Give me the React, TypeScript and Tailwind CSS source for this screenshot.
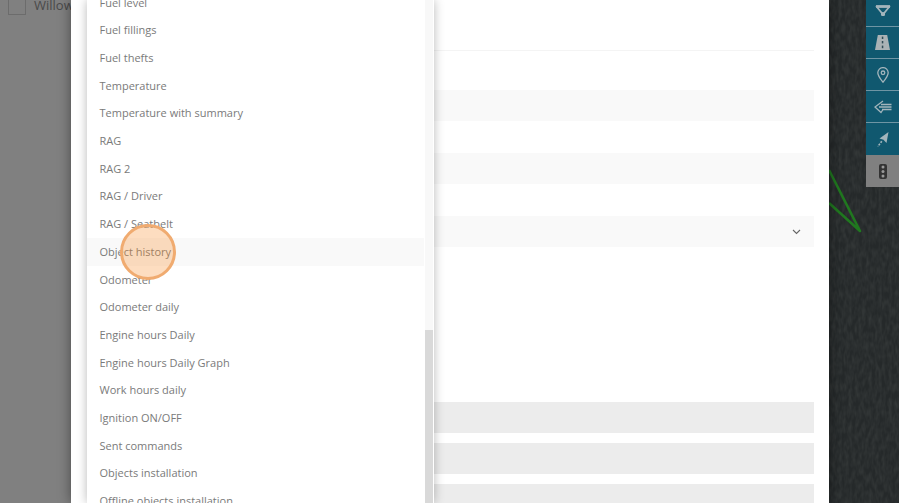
const items = [
  "Fuel level",
  "Fuel fillings",
  "Fuel thefts",
  "Temperature",
  "Temperature with summary",
  "RAG",
  "RAG 2",
  "RAG / Driver",
  "RAG / Seatbelt",
  "Object history",
  "Odometer",
  "Odometer daily",
  "Engine hours Daily",
  "Engine hours Daily Graph",
  "Work hours daily",
  "Ignition ON/OFF",
  "Sent commands",
  "Objects installation",
  "Offline objects installation",
];

const ink = "#a3b5bc";

function TriangleIcon() {
  return (
    <svg width="16" height="11" viewBox="0 0 16 11" fill="none" stroke={ink} strokeWidth="1.8" strokeLinejoin="round">
      <path d="M1.5 1.5 H14.5 L8 9.5 Z" />
      <path d="M1 1.5 H15" strokeWidth="2.6" />
      <circle cx="8" cy="9.2" r="1.2" fill={ink} />
    </svg>
  );
}

function RoadIcon() {
  return (
    <svg width="15" height="15" viewBox="0 0 15 15">
      <path d="M2.8 0 H12.2 L15 15 H0 Z" fill="#aab2b5" />
      <rect x="6.8" y="1.6" width="1.5" height="2.4" fill="#2f4a55" />
      <rect x="6.8" y="6" width="1.5" height="2.4" fill="#2f4a55" />
      <rect x="6.8" y="10.6" width="1.5" height="2.6" fill="#2f4a55" />
    </svg>
  );
}

function PinIcon() {
  return (
    <svg width="12" height="16" viewBox="0 0 12 16" fill="none" stroke={ink} strokeWidth="1.3">
      <path d="M6 15.2 C3.2 11.8 0.8 9 0.8 5.8 A5.2 5.2 0 0 1 11.2 5.8 C11.2 9 8.8 11.8 6 15.2 Z" />
      <circle cx="6" cy="5.8" r="1.8" />
    </svg>
  );
}

function LinesArrowIcon() {
  return (
    <svg width="18" height="14" viewBox="0 0 18 14" fill="none" stroke={ink} strokeWidth="1.3">
      <path d="M9 1 L1 7 L7 12.5 L9 9.5" />
      <path d="M7 4.5 H17.5 M5 7 H17.5 M8 9.5 H17.5" />
    </svg>
  );
}

function ArrowIcon() {
  return (
    <svg width="12" height="15" viewBox="0 0 12 15">
      <path d="M11.5 0 L9.5 11 L6.5 7.8 L2.5 6.5 Z" fill={ink} />
      <path d="M4.8 9.2 L0.8 14.6" stroke={ink} strokeWidth="1.6" strokeDasharray="2 1.2" fill="none" />
    </svg>
  );
}

function TrafficIcon() {
  return (
    <svg width="8" height="15" viewBox="0 0 8 15">
      <rect width="8" height="15" rx="2" fill="#333333" />
      <circle cx="4" cy="3" r="1.5" fill="#999999" />
      <circle cx="4" cy="7.5" r="1.5" fill="#999999" />
      <circle cx="4" cy="12" r="1.5" fill="#999999" />
    </svg>
  );
}

function ToolButton({ className, children }: { className: string; children: React.ReactNode }) {
  return <div className={`flex w-full items-center justify-center ${className}`}>{children}</div>;
}

export default function App() {
  return (
    <div className="relative flex h-[503px] w-[899px] overflow-hidden bg-[#808080] font-['Open_Sans',sans-serif] text-[11px] text-[#7a7a7a]">
      <div className="flex h-[15px] w-[71px] shrink-0 items-end overflow-hidden pl-2 whitespace-nowrap">
        <div className="h-[17px] w-[18px] shrink-0 border border-[#6c6c6c]" />
        <span className="mb-[3px] ml-2 text-[13px] leading-none text-[#4a4a4a]">Willow</span>
      </div>

      <main className="relative z-10 flex w-[758px] shrink-0 flex-col bg-white pr-[15px] pl-4 shadow-[0_0_12px_rgba(0,0,0,0.45)]">
        <div className="h-[51px] shrink-0 border-b border-[#f4f4f4]" />
        <div className="mt-[39px] h-[31px] shrink-0 bg-[#f9f9f9]" />
        <div className="mt-8 h-[31px] shrink-0 bg-[#f9f9f9]" />
        <div className="mt-8 flex h-[31px] shrink-0 items-center justify-end bg-[#f9f9f9] pr-[13px]">
          <svg width="9" height="6" viewBox="0 0 9 6" fill="none" stroke="#666666" strokeWidth="1.1">
            <path d="M1 1 L4.5 4.5 L8 1" />
          </svg>
        </div>
        <div className="mt-[155px] h-[31px] shrink-0 bg-[#ececec]" />
        <div className="mt-[10px] h-[31px] shrink-0 bg-[#ececec]" />
        <div className="mt-[10px] h-[31px] shrink-0 bg-[#ececec]" />

        <div className="absolute top-0 left-4 flex h-[503px] w-[347px] bg-white shadow-[0_0_10px_rgba(0,0,0,0.28)]">
          <ul className="-mt-[10.98px] w-[337px] shrink-0">
            {items.map((item) => (
              <li
                key={item}
                className={`flex h-[27.7px] items-center pl-[12.5px] whitespace-nowrap ${
                  item === "Object history" ? "bg-[#f9f9f9]" : ""
                }`}
              >
                {item}
              </li>
            ))}
          </ul>
          <div className="ml-px flex w-2 flex-col justify-end bg-[#f8f8f8]">
            <div className="h-[173px] bg-[#d9d9d9]" />
          </div>
        </div>

        <div className="absolute top-[224px] left-[49px] h-[56px] w-[56px] rounded-full border-[3px] border-[#f0ab70] bg-[#f9902f]/30" />
      </main>

      <aside className="relative flex grow justify-end overflow-hidden bg-[#25292a]">
        <svg className="absolute top-0 left-0" width="70" height="503">
          <filter id="grain">
            <feTurbulence type="fractalNoise" baseFrequency="0.3 0.12" numOctaves="2" seed="4" />
            <feColorMatrix values="0 0 0 0 0.28  0 0 0 0 0.3  0 0 0 0 0.28  0.25 0 0 0 -0.08" />
          </filter>
          <rect width="70" height="503" filter="url(#grain)" />
          <path d="M0 170 L31 231 L0 203" fill="none" stroke="#20781f" strokeWidth="2.6" strokeLinejoin="round" />
        </svg>
        <div className="relative flex h-[187px] w-[33px] flex-col">
          <ToolButton className="h-[27px] border-b border-[#6f95a4] bg-[#10586f] pb-[5px]">
            <TriangleIcon />
          </ToolButton>
          <ToolButton className="h-[32px] border-b border-[#6f95a4] bg-[#10586f]">
            <RoadIcon />
          </ToolButton>
          <ToolButton className="h-[32px] border-b border-[#6f95a4] bg-[#10586f]">
            <PinIcon />
          </ToolButton>
          <ToolButton className="h-[32px] border-b border-[#6f95a4] bg-[#10586f]">
            <LinesArrowIcon />
          </ToolButton>
          <ToolButton className="h-[32px] bg-[#10586f]">
            <ArrowIcon />
          </ToolButton>
          <ToolButton className="h-[32px] bg-[#808080]">
            <TrafficIcon />
          </ToolButton>
        </div>
      </aside>
    </div>
  );
}
